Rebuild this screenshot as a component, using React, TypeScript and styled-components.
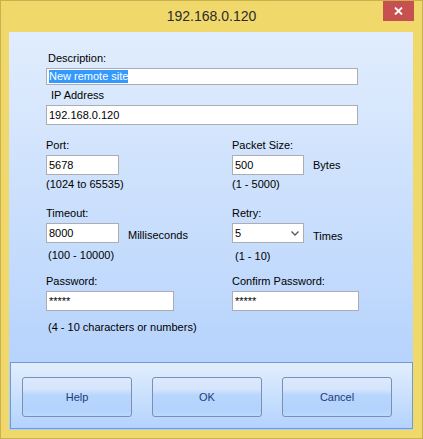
import styled, { createGlobalStyle } from "styled-components";

const GlobalStyle = createGlobalStyle`
  body {
    margin: 0;
    font-family: "Liberation Sans", Arial, sans-serif;
  }
`;

const Window = styled.div`
  width: 423px;
  height: 439px;
  box-sizing: border-box;
  border: 1px solid #c9b14f;
  background-color: #f0d86b;
  display: flex;
  flex-direction: column;
`;

const TitleBar = styled.div`
  height: 31px;
  display: grid;
  grid-template-columns: 1fr auto 1fr;
  align-items: start;
`;

const Title = styled.span`
  grid-column: 2;
  line-height: 31px;
  font-size: 14px;
  color: #2c2c2c;
`;

const CloseButton = styled.div`
  grid-column: 3;
  justify-self: end;
  width: 31px;
  height: 20px;
  margin-right: 8px;
  background-color: #c75050;
  display: flex;
  align-items: center;
  justify-content: center;
`;

const Client = styled.div`
  flex: 1;
  margin: 0 9px 8px 8px;
  background: linear-gradient(to bottom, #e1edfd, #aecefc);
  display: flex;
  flex-direction: column;
`;

const Form = styled.div`
  flex: 1;
  padding: 20px 0 0 37px;
  display: flex;
  flex-direction: column;
  font-size: 11px;
  color: #000;
`;

const Group = styled.div<{ $top?: number }>`
  display: flex;
  flex-direction: column;
  align-items: flex-start;
  margin-top: ${(p) => p.$top ?? 0}px;
`;

const Grid = styled.div`
  margin-top: 14px;
  display: grid;
  grid-template-columns: 186px auto;
  grid-auto-rows: 68px;
`;

const Label = styled.span<{ $indent?: number }>`
  line-height: 13px;
  margin: 0 0 3px ${(p) => p.$indent ?? 0}px;
`;

const InputRow = styled.div`
  display: flex;
  align-items: center;
  gap: 9px;
`;

const TextBox = styled.div<{ $width: number; $height?: number }>`
  width: ${(p) => p.$width}px;
  height: ${(p) => p.$height ?? 20}px;
  box-sizing: border-box;
  border: 1px solid #abadb3;
  background-color: #fff;
  padding: 0 4px 0 2px;
  display: flex;
  align-items: center;
  justify-content: space-between;
  white-space: nowrap;
  overflow: hidden;
`;

const Selected = styled.span`
  line-height: 13px;
  background-color: #3399ff;
  color: #fff;
`;

const Unit = styled.span<{ $drop?: number }>`
  margin-top: ${(p) => p.$drop ?? 0}px;
`;

const Hint = styled.span<{ $top: number; $indent?: number }>`
  line-height: 13px;
  margin: ${(p) => p.$top}px 0 0 ${(p) => p.$indent ?? 0}px;
`;

const ButtonPanel = styled.div`
  height: 67px;
  margin: 0 0 1px 1px;
  box-sizing: border-box;
  border: 1px solid #6b9bd9;
  background: linear-gradient(to bottom, #e2eefd, #b3d3fd);
  display: flex;
  justify-content: space-between;
  align-items: flex-start;
  padding: 14px 20px 0 11px;
`;

const Button = styled.button`
  width: 110px;
  height: 40px;
  box-sizing: border-box;
  border: 1px solid #7d8fb0;
  border-radius: 3px;
  background: linear-gradient(
    to bottom,
    #dde9fd 0%,
    #d5e5fd 30%,
    #b8d6fd 45%,
    #b3d3fd 85%,
    #bcd9fd 100%
  );
  font-family: "Liberation Sans", Arial, sans-serif;
  font-size: 11px;
  color: #1e3b7a;
  padding: 0;
`;

const Chevron = () => (
  <svg width="8" height="5" viewBox="0 0 8 5">
    <path d="M0.5 0.5 L4 4 L7.5 0.5" fill="none" stroke="#5a5a5a" strokeWidth="1.4" />
  </svg>
);

const App = () => {
  return (
    <>
      <GlobalStyle />
      <Window>
        <TitleBar>
          <Title>192.168.0.120</Title>
          <CloseButton>
            <svg width="9" height="8" viewBox="0 0 9 8">
              <path d="M1 0.5 L8 7.5 M8 0.5 L1 7.5" stroke="#fff" strokeWidth="1.8" />
            </svg>
          </CloseButton>
        </TitleBar>
        <Client>
          <Form>
            <Group>
              <Label $indent={2}>Description:</Label>
              <TextBox $width={312} $height={17}>
                <Selected>New remote site</Selected>
              </TextBox>
            </Group>
            <Group $top={4}>
              <Label $indent={5}>IP Address</Label>
              <TextBox $width={312}>192.168.0.120</TextBox>
            </Group>
            <Grid>
              <Group>
                <Label>Port:</Label>
                <TextBox $width={73}>5678</TextBox>
                <Hint $top={3}>(1024 to 65535)</Hint>
              </Group>
              <Group>
                <Label>Packet Size:</Label>
                <InputRow>
                  <TextBox $width={72}>500</TextBox>
                  <Unit>Bytes</Unit>
                </InputRow>
                <Hint $top={3}>(1 - 5000)</Hint>
              </Group>
              <Group>
                <Label>Timeout:</Label>
                <InputRow>
                  <TextBox $width={73}>8000</TextBox>
                  <Unit $drop={4}>Milliseconds</Unit>
                </InputRow>
                <Hint $top={6} $indent={2}>(100 - 10000)</Hint>
              </Group>
              <Group>
                <Label>Retry:</Label>
                <InputRow>
                  <TextBox $width={72}>
                    5
                    <Chevron />
                  </TextBox>
                  <Unit $drop={5}>Times</Unit>
                </InputRow>
                <Hint $top={7} $indent={3}>(1 - 10)</Hint>
              </Group>
              <Group>
                <Label>Password:</Label>
                <TextBox $width={128}>*****</TextBox>
                <Hint $top={10} $indent={2}>(4 - 10 characters or numbers)</Hint>
              </Group>
              <Group>
                <Label>Confirm Password:</Label>
                <TextBox $width={127}>*****</TextBox>
              </Group>
            </Grid>
          </Form>
          <ButtonPanel>
            <Button>Help</Button>
            <Button>OK</Button>
            <Button>Cancel</Button>
          </ButtonPanel>
        </Client>
      </Window>
    </>
  );
};

export default App;
